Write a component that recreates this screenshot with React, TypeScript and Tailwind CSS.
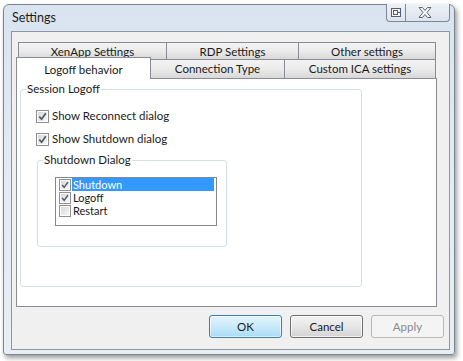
import React from 'react';

function Check({ checked, box = 'h-[13px] w-[13px]', inner = 'h-[9px] w-[9px]' }: { checked: boolean; box?: string; inner?: string }) {
  return (
    <span className={`flex shrink-0 items-center justify-center border border-[#8e8f8f] bg-white ${box}`}>
      <span className={`flex items-center justify-center bg-gradient-to-br from-[#d8d8d8] to-[#f7f7f7] ${inner}`}>
        {checked && (
          <svg viewBox="0 0 9 9" className="h-full w-full">
            <path d="M1.3 4.6 L3.6 7.2 L7.8 1.2" fill="none" stroke="#4a5a70" strokeWidth="1.7" />
          </svg>
        )}
      </span>
    </span>
  );
}

const tabBg = 'bg-gradient-to-b from-[#f3f3f3] via-[#ebebeb] to-[#d8d8d8]';

export default function App() {
  return (
    <div className="h-[361px] w-[463px] overflow-hidden bg-white pl-[3px] pt-[4px] font-['Segoe_UI','Lato',sans-serif] text-[11.5px] text-[#1a1a1a]">
      {/* window */}
      <div className="flex h-[351px] w-[452px] flex-col rounded-t-[6px] rounded-b-[3px] border border-[#7b8592] bg-gradient-to-b from-[#d9e4f0] via-[#e4ebf3] to-[#e9eef4] pb-[4px] pl-[7px] pr-[4px] shadow-[2px_3px_5px_rgba(0,0,0,0.4)]">
        {/* title bar */}
        <div className="-ml-[7px] -mr-[4px] flex h-[26px] justify-between">
          <div className="flex items-center pl-[8px] pt-[1px] text-[12.5px] text-[#1e1e1e]">Settings</div>
          <div className="mr-[4px] -mt-px flex items-start">
            <div className="flex h-[18px] w-[20px] items-center justify-center rounded-bl-[4px] border border-t-0 border-[#7d8896] bg-gradient-to-b from-[#eef2f7] to-[#dce4ee]">
              <svg viewBox="0 0 12 11" className="h-[11px] w-[12px]">
                <rect x="1.5" y="1.5" width="9" height="8" fill="#f4f6f9" stroke="#55606e" />
                <rect x="3.5" y="3.5" width="4" height="4" fill="none" stroke="#55606e" />
                <path d="M7.5 5.5 H10.5" stroke="#55606e" />
              </svg>
            </div>
            <div className="flex h-[18px] w-[44px] items-center justify-center rounded-br-[4px] border border-l-0 border-t-0 border-[#7d8896] bg-gradient-to-b from-[#eef2f7] to-[#dce4ee] pr-[6px]">
              <svg viewBox="0 0 14 11" className="h-[11px] w-[14px]">
                <polygon
                  points="1,0.5 4.5,0.5 7,3.5 9.5,0.5 13,0.5 9,5.5 13,10.5 9.5,10.5 7,7.5 4.5,10.5 1,10.5 5,5.5"
                  fill="#f4f6f9"
                  stroke="#5e6a78"
                  strokeWidth="1"
                />
              </svg>
            </div>
          </div>
        </div>

        {/* client */}
        <div className="flex flex-1 flex-col border border-[#8d97a3] bg-[#f0f0f0] pl-[4px] pt-[10px]">
          {/* tab control */}
          <div className="w-[421px]">
            <div className="ml-[2px] flex h-[17px]">
              <div className={`flex w-[148px] items-center justify-center border-l border-t border-[#898c95] pt-[1px] ${tabBg}`}>XenApp Settings</div>
              <div className={`flex w-[132px] items-center justify-center border-l border-t border-[#898c95] pt-[1px] ${tabBg}`}>RDP Settings</div>
              <div className={`flex w-[138px] items-center justify-center border-x border-t border-[#898c95] pt-[1px] ${tabBg}`}>Other settings</div>
            </div>
            <div className="flex h-[19px] items-end">
              <div className="relative z-10 -mb-px flex h-[22px] w-[135px] items-start justify-center border-x border-t border-[#898c95] bg-white pt-[3px]">
                Logoff behavior
              </div>
              <div className={`flex h-[19px] w-[134px] items-center justify-center border-t border-r border-[#898c95] ${tabBg}`}>Connection Type</div>
              <div className={`flex h-[19px] w-[151px] items-center justify-center border-t border-r border-[#898c95] ${tabBg}`}>Custom ICA settings</div>
            </div>

            {/* panel */}
            <div className="h-[229px] border border-[#898c95] bg-white pt-[3px] pl-[3px]">
              <fieldset className="h-[205px] w-[342px] rounded-[3px] border border-[#d5dfe5]">
                <legend className="ml-[5px] px-[1px] leading-[14px]">Session Logoff</legend>
                <div className="ml-[15px] mt-[12px] flex h-[16px] items-center gap-[3px]">
                  <Check checked />
                  <span>Show Reconnect dialog</span>
                </div>
                <div className="ml-[15px] mt-[7px] flex h-[16px] items-center gap-[3px]">
                  <Check checked />
                  <span>Show Shutdown dialog</span>
                </div>
                <fieldset className="ml-[16px] mt-[6px] h-[94px] w-[190px] rounded-[3px] border border-[#d5dfe5]">
                  <legend className="ml-[5px] px-[1px] leading-[14px]">Shutdown Dialog</legend>
                  <div className="ml-[17px] mt-[10px] h-[49px] w-[162px] border border-[#828790] bg-white">
                    {[
                      { label: 'Shutdown', checked: true, selected: true },
                      { label: 'Logoff', checked: true, selected: false },
                      { label: 'Restart', checked: false, selected: false },
                    ].map((item) => (
                      <div key={item.label} className="flex h-[13px] items-center overflow-hidden leading-[13px]">
                        <span className="ml-[3px]">
                          <Check checked={item.checked} box="h-[12px] w-[12px]" inner="h-[8px] w-[8px]" />
                        </span>
                        <span
                          className={
                            item.selected
                              ? 'ml-[1px] block h-[13px] w-[142px] bg-[#3399ff] pl-[1px] text-[11px] text-white'
                              : 'ml-[1px] block h-[13px] pl-[1px] text-[11px]'
                          }
                        >
                          {item.label}
                        </span>
                      </div>
                    ))}
                  </div>
                </fieldset>
              </fieldset>
            </div>
          </div>

          {/* buttons */}
          <div className="mt-[8px] flex justify-end gap-[8px] pr-[5px]">
            <button className="h-[23px] w-[73px] rounded-[3px] border border-[#3c7fb1] bg-gradient-to-b from-[#e3f4fc] via-[#c9ebfa] to-[#a9dcf5] shadow-[inset_0_0_0_1px_rgba(255,255,255,0.6)]">
              OK
            </button>
            <button className="h-[23px] w-[73px] rounded-[3px] border border-[#707070] bg-gradient-to-b from-[#f3f3f3] via-[#e6e6e6] to-[#d3d3d3] shadow-[inset_0_0_0_1px_rgba(255,255,255,0.7)]">
              Cancel
            </button>
            <button className="h-[23px] w-[73px] rounded-[3px] border border-[#b5b9bc] bg-[#f4f4f4] text-[#8a8a8a]">
              Apply
            </button>
          </div>
        </div>
      </div>
    </div>
  );
}
